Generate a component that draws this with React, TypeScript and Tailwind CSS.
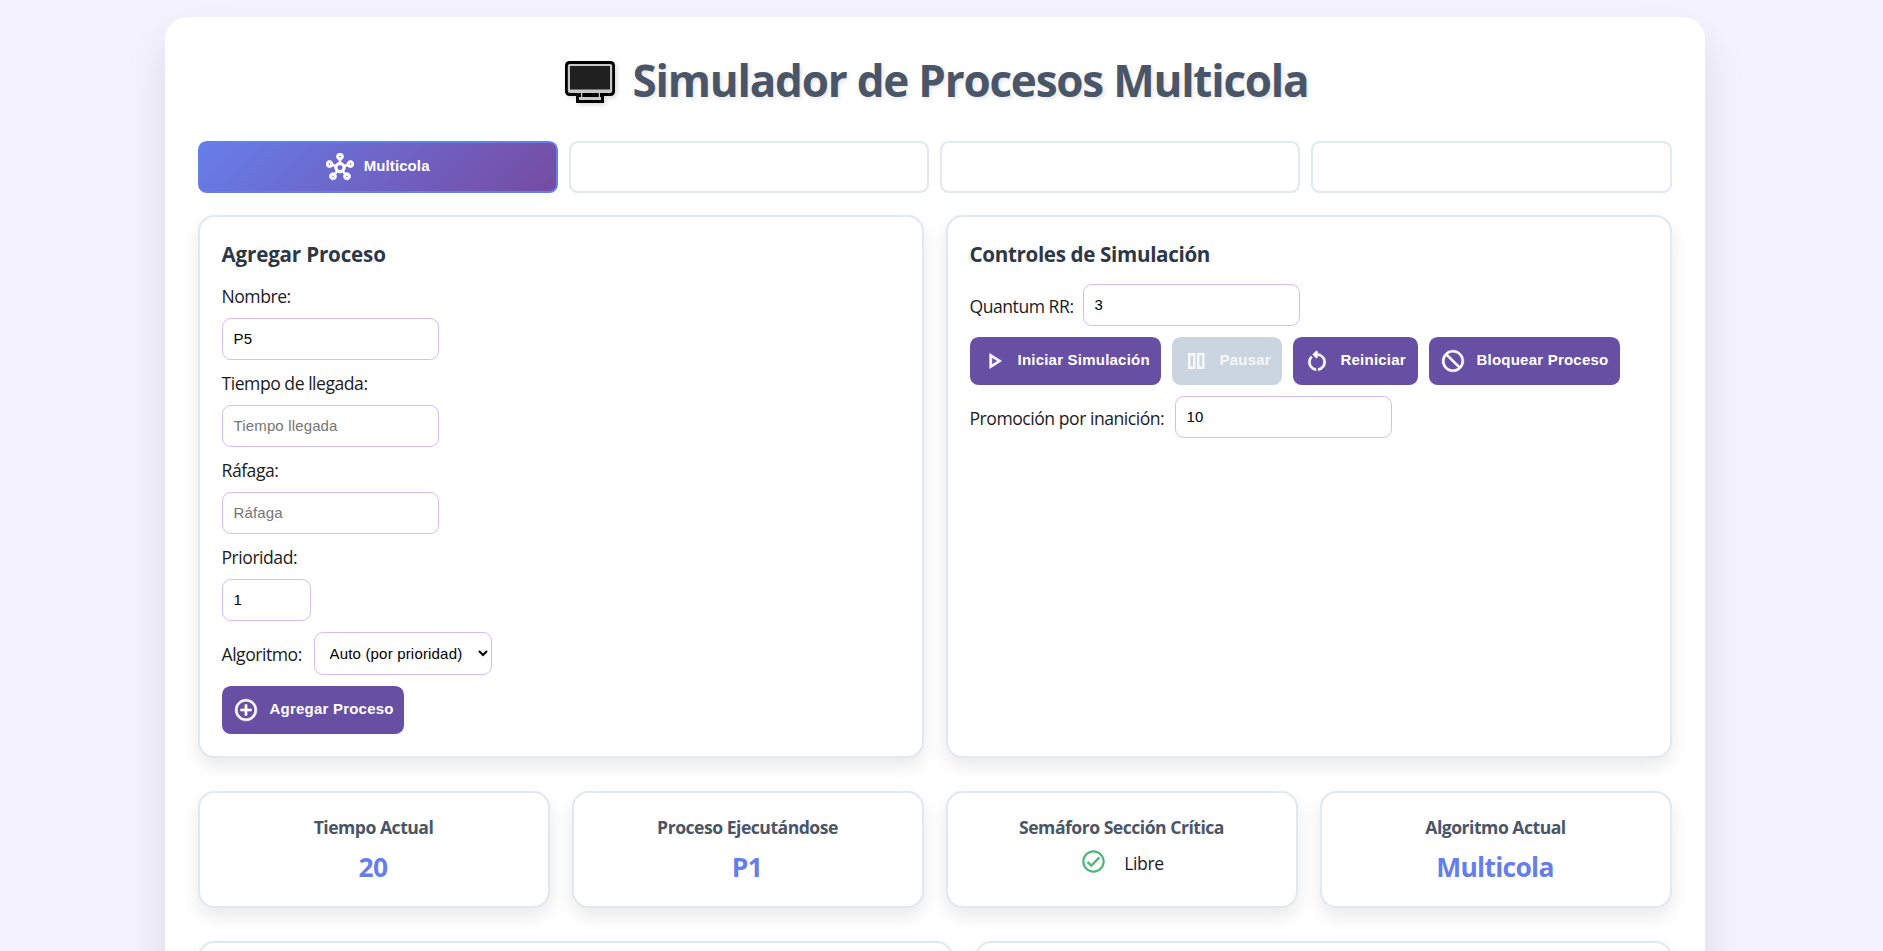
import type { ReactNode } from "react";
import { MdAddCircleOutline, MdBlock, MdOutlineCheckCircle, MdOutlineHub, MdOutlinePlayArrow, MdOutlineRestartAlt } from "react-icons/md";

const cardClass = "rounded-[16.5px] border-2 border-[#e2e8f0] bg-white shadow-[0_8px_18px_rgba(0,0,0,0.09)]";
const inputClass = "h-[42px] rounded-[8.8px] border border-[#d0bcff] bg-white px-[11px] pb-[2px] font-['Liberation_Sans',sans-serif] text-[15px] tracking-[0.15px] text-black placeholder:text-[#757575]";
const iconClass = "size-[26px] shrink-0 stroke-current stroke-[0.5] [&_path[fill=none]]:hidden";

function Action({ icon, width, disabled, children }: { icon: ReactNode; width: string; disabled?: boolean; children: ReactNode }) {
  return (
    <button
      disabled={disabled}
      className={`flex h-12 shrink-0 items-center gap-[11px] whitespace-nowrap rounded-[8.8px] pl-[11px] font-['Liberation_Sans',sans-serif] text-[15px] font-bold tracking-[0.22px] ${width} ${disabled ? "bg-[#cbd5e0] text-white/80" : "bg-[#6750a4] text-white"}`}
    >
      {icon}
      <span className="-mt-[2px]">{children}</span>
    </button>
  );
}

function PauseIcon() {
  return (
    <svg viewBox="0 0 26 26" className="size-[26px] shrink-0 fill-white/85">
      <path fillRule="evenodd" d="M5 5h7.500v16H5zM7.500 7.500v11h2.500v-11zM14 5h7.500v16H14zM16.500 7.500v11h2.500v-11z" />
    </svg>
  );
}

function Monitor() {
  return (
    <svg viewBox="0 0 50 43" className="mt-[4px] h-[43px] w-[50px] drop-shadow-[2px_2px_2px_rgba(0,0,0,0.15)]">
      <rect width="50" height="35" rx="4.500" fill="#000" />
      <rect x="2.8" y="3" width="44.400" height="29" rx="2" fill="#c8c8c8" />
      <rect x="5" y="5" width="40" height="23.500" fill="#202020" />
      <path d="M11 34.500h28V42H11z" fill="#000" />
      <path d="M16 31.500h1.500V36H33.500v-4.500H35V36h1v3H14v-3h2z" fill="#c8c8c8" />
      <path d="M17.500 32H33.500v4H17.500z" fill="#000" />
    </svg>
  );
}

function Stat({ title, children }: { title: string; children: ReactNode }) {
  return (
    <div className={`h-[117px] pt-[22px] text-center ${cardClass}`}>
      <h4 className="h-[24px] text-[17.6px] leading-[24px] font-bold tracking-[-0.5px] text-[#4a5568]">{title}</h4>
      {children}
    </div>
  );
}

const valueClass = "mt-[10px] pr-px text-[26.4px] leading-[37px] font-bold tracking-[-0.7px] text-[#667eea]";
const labelClass = "block h-[23px] whitespace-nowrap text-[17.6px] leading-[25px] tracking-[-0.48px]";
const headingClass = "h-[45px] text-[20.6px] leading-[30px] font-bold text-[#2d3748]";

export default function App() {
  return (
    <div className="h-[951px] overflow-hidden bg-[#f4f2ff] pt-[17px] pl-[164.5px] font-['Open_Sans','Noto_Sans',sans-serif] text-[#1c1b1f]">
      <main className="h-[1200px] w-[1540px] rounded-[22px] bg-white px-[33px] pt-[33px] shadow-[0_22px_44px_rgba(0,0,0,0.1)]">
        <h1 className="flex h-[60px] items-center justify-center gap-[18px] pl-[4px] text-[44px] font-bold tracking-[-1.22px] whitespace-nowrap text-[#4a5568] [text-shadow:2px_2px_4px_rgba(0,0,0,0.1)]">
          <Monitor />
          <span>Simulador de Procesos Multicola</span>
        </h1>

        <nav className="mt-[31px] grid h-[52px] grid-cols-4 gap-[11px]">
          <button className="flex items-center justify-center gap-[10px] rounded-[8.8px] border-2 border-[#667eea] bg-[linear-gradient(135deg,#667eea_0%,#764ba2_100%)] font-['Liberation_Sans',sans-serif] text-[15px] font-bold tracking-[0.1px] text-white">
            <MdOutlineHub className="-mt-px size-[28px] stroke-current stroke-[0.7] [&_path[fill=none]]:hidden" />
            <span className="-mt-[2px]">Multicola</span>
          </button>
          <button className="rounded-[8.8px] border-2 border-[#e2e8f0]" />
          <button className="rounded-[8.8px] border-2 border-[#e2e8f0]" />
          <button className="rounded-[8.8px] border-2 border-[#e2e8f0]" />
        </nav>

        <section className="mt-[22px] grid h-[543px] grid-cols-2 gap-[22px]">
          <div className={`px-[22px] pt-[22px] ${cardClass}`}>
            <h3 className={`tracking-[-0.18px] ${headingClass}`}>Agregar Proceso</h3>
            <div className="flex flex-col items-start gap-[11px]">
              <label className={labelClass}>Nombre:</label>
              <input className={`w-[217px] ${inputClass}`} defaultValue="P5" />
              <label className={labelClass}>Tiempo de llegada:</label>
              <input className={`w-[217px] ${inputClass}`} placeholder="Tiempo llegada" />
              <label className={labelClass}>Ráfaga:</label>
              <input className={`w-[217px] ${inputClass}`} placeholder="Ráfaga" />
              <label className={labelClass}>Prioridad:</label>
              <input className={`w-[89px] ${inputClass}`} defaultValue="1" />
              <div className="flex items-center gap-[11px]">
                <label className={`w-[81px] ${labelClass}`}>Algoritmo:</label>
                <select className="h-[43px] w-[178px] rounded-[8.8px] border border-[#d0bcff] bg-white pl-[11px] font-['Liberation_Sans',sans-serif] text-[15px] tracking-[0.18px] text-black">
                  <option>Auto (por prioridad)</option>
                </select>
              </div>
              <Action width="w-[182px]" icon={<MdAddCircleOutline className={iconClass} />}>Agregar Proceso</Action>
            </div>
          </div>

          <div className={`px-[22px] pt-[22px] ${cardClass}`}>
            <h3 className={`tracking-[-0.34px] ${headingClass}`}>Controles de Simulación</h3>
            <div className="flex flex-col items-start gap-[11px]">
              <div className="flex items-center gap-[11px]">
                <label className={`w-[102px] ${labelClass}`}>Quantum RR:</label>
                <input className={`w-[217px] ${inputClass}`} defaultValue="3" />
              </div>
              <div className="flex gap-[11px]">
                <Action width="w-[191px]" icon={<MdOutlinePlayArrow className={iconClass} />}>Iniciar Simulación</Action>
                <Action width="w-[110px]" disabled icon={<PauseIcon />}>Pausar</Action>
                <Action width="w-[125px]" icon={<MdOutlineRestartAlt className={iconClass} />}>Reiniciar</Action>
                <Action width="w-[191px]" icon={<MdBlock className={`-scale-x-100 ${iconClass}`} />}>Bloquear Proceso</Action>
              </div>
              <div className="flex items-center gap-[11px]">
                <label className={`w-[194px] ${labelClass}`}>Promoción por inanición:</label>
                <input className={`w-[217px] ${inputClass}`} defaultValue="10" />
              </div>
            </div>
          </div>
        </section>

        <section className="mt-[33px] grid grid-cols-4 gap-[22px]">
          <Stat title="Tiempo Actual"><p className={valueClass}>20</p></Stat>
          <Stat title="Proceso Ejecutándose"><p className={valueClass}>P1</p></Stat>
          <Stat title="Semáforo Sección Crítica">
            <div className="mt-[9px] flex justify-center gap-[17px] pl-px">
              <MdOutlineCheckCircle className="size-[27px] text-[#48bb78]" />
              <span className="text-[17.6px] leading-[31px] tracking-[-0.42px]">Libre</span>
            </div>
          </Stat>
          <Stat title="Algoritmo Actual"><p className={valueClass}>Multicola</p></Stat>
        </section>

        <section className="mt-[33px] grid h-[200px] grid-cols-[755px_1fr] gap-[22px]">
          <div className={cardClass} />
          <div className={cardClass} />
        </section>
      </main>
    </div>
  );
}
